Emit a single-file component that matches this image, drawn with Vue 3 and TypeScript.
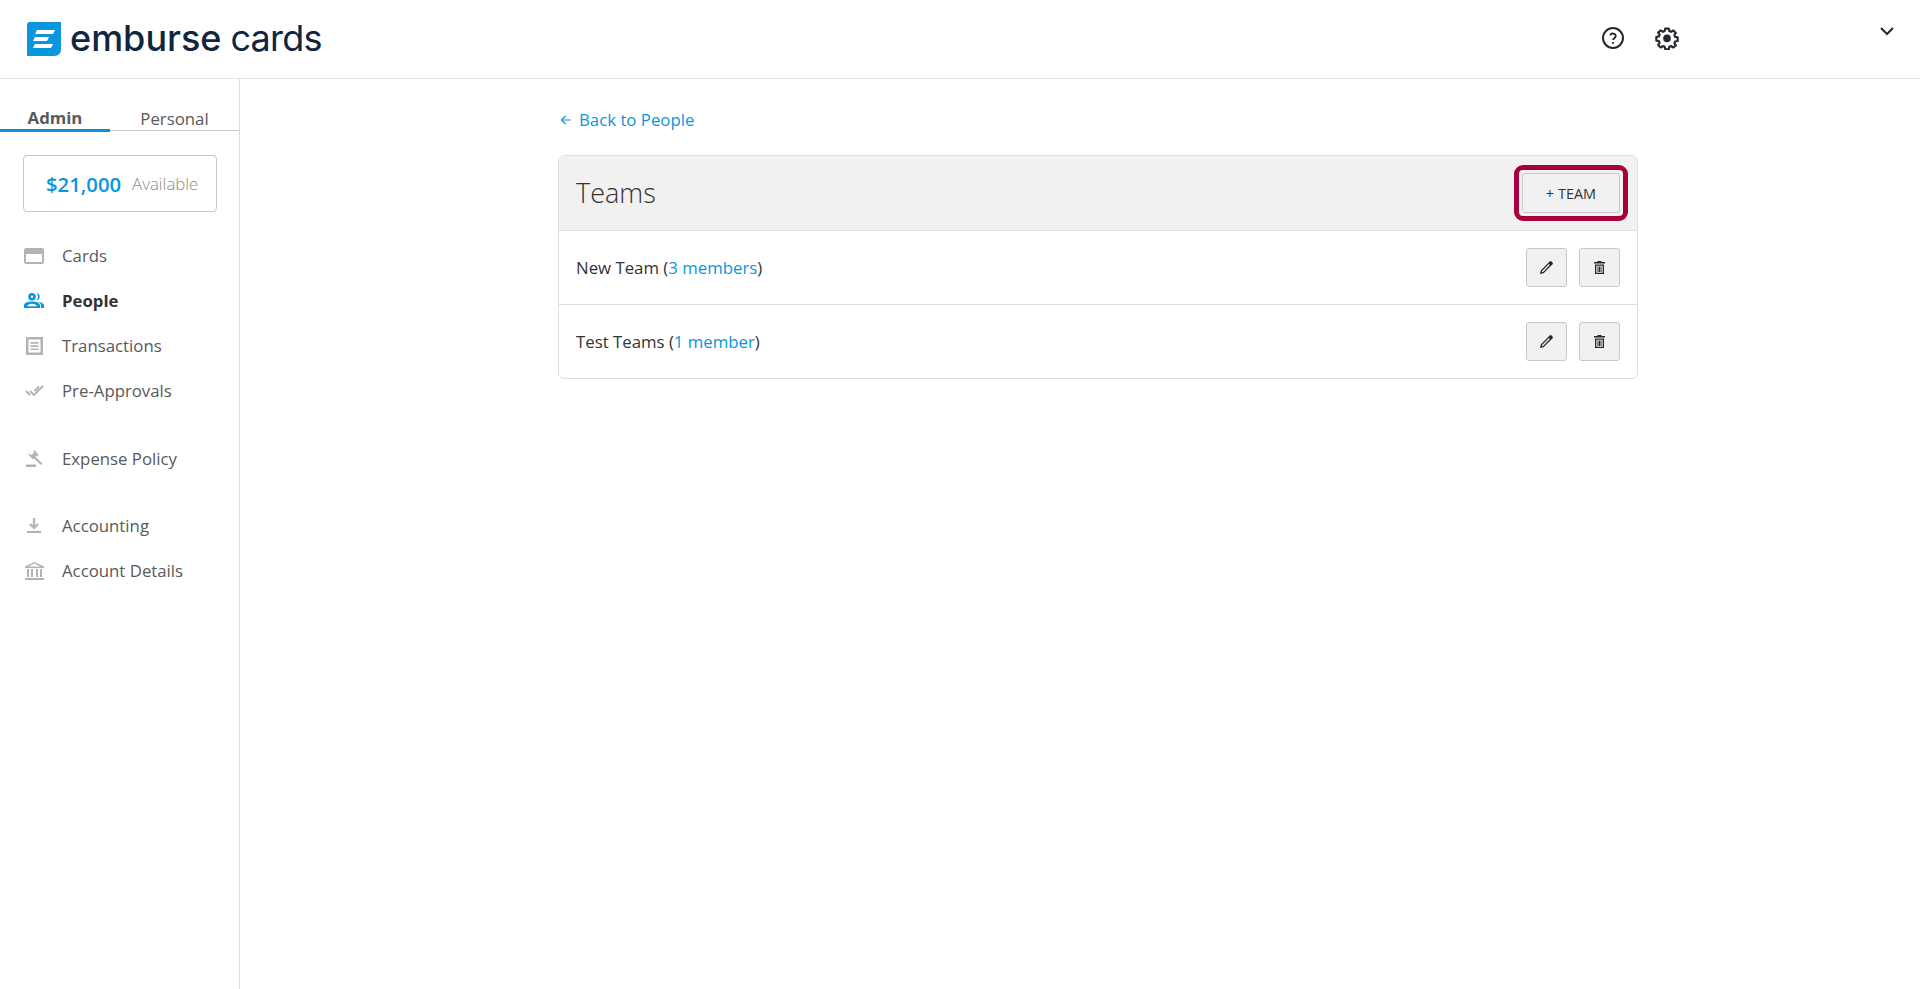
<script setup lang="ts">
interface NavItem { label: string; icon: string; active?: boolean; gap?: boolean }
const nav: NavItem[] = [
  { label: 'Cards', icon: 'card' },
  { label: 'People', icon: 'people', active: true },
  { label: 'Transactions', icon: 'receipt' },
  { label: 'Pre-Approvals', icon: 'checks' },
  { label: 'Expense Policy', icon: 'gavel', gap: true },
  { label: 'Accounting', icon: 'download', gap: true },
  { label: 'Account Details', icon: 'bank' },
]
const teams = [
  { name: 'New Team', members: '3 members' },
  { name: 'Test Teams', members: '1 member' },
]
</script>

<template>
  <div class="page">
    <header class="topbar">
      <div class="logo">
        <svg class="logo-mark" width="34" height="34" viewBox="0 0 34 34">
          <path d="M3 0H34V27Q34 34 27 34H0V3Q0 0 3 0Z" fill="#0a96dc" />
          <path d="M10 8H28L26 12H8ZM8 15H22L20 19H6ZM8 22H26L24 26H6Z" fill="#fff" />
        </svg>
        <span class="logo-text">emburse</span>
        <span class="logo-text second">cards</span>
      </div>
      <div class="top-actions">
        <svg width="24" height="24" viewBox="0 0 24 24" fill="none" stroke="#24292e" stroke-width="2">
          <circle cx="12" cy="12" r="10" />
          <path d="M9.200 9.400a2.900 2.900 0 0 1 5.600.7c0 1.900-2.800 2.300-2.800 4" stroke-width="1.800" />
          <circle cx="12" cy="17" r="1.100" fill="#24292e" stroke="none" />
        </svg>
        <svg width="24" height="24" viewBox="0 0 24 24" fill="none" stroke="#24292e" stroke-width="2.400" stroke-linejoin="round">
          <path d="M10 2h4l.6 2.800 1.900.8L19 4l2.800 2.900-1.600 2.400.8 1.900 2.900.6v4l-2.900.5-.8 1.900 1.600 2.400L19 23l-2.500-1.600-1.900.8L14 25h-4l-.6-2.800-1.900-.8L5 23l-2.800-2.900 1.600-2.400-.8-1.900L.1 15.300v-4l2.900-.6.8-1.900-1.600-2.400L5 4l2.500 1.600 1.900-.8Z" transform="translate(1.200 .8) scale(.9)" />
          <circle cx="12" cy="12.400" r="3.800" fill="#24292e" stroke="none" />
        </svg>
        <svg class="chevron" width="16" height="10" viewBox="0 0 16 10" fill="none" stroke="#24292e" stroke-width="2">
          <path d="M2 2l6 6 6-6" />
        </svg>
      </div>
    </header>

    <div class="body">
      <aside class="sidebar">
        <div class="tabs">
          <div class="tab active">Admin</div>
          <div class="tab">Personal</div>
        </div>
        <div class="balance">
          <span class="amount">$21,000</span>
          <span class="avail">Available</span>
        </div>
        <nav class="nav">
          <a v-for="item in nav" :key="item.label" class="nav-item" :class="{ active: item.active, gap: item.gap }">
            <span class="nav-icon">
              <svg v-if="item.icon === 'card'" width="20" height="16" viewBox="0 0 20 16">
                <path d="M2 0h16a2 2 0 0 1 2 2v12a2 2 0 0 1-2 2H2a2 2 0 0 1-2-2V2a2 2 0 0 1 2-2Zm0 6v8h16V6Z" fill="#b3b3b3" fill-rule="evenodd" />
              </svg>
              <svg v-else-if="item.icon === 'people'" width="20" height="15" viewBox="0 0 20 15" fill="#0a96dc">
                <path d="M8 0a3.800 3.800 0 1 1 0 7.600A3.800 3.800 0 0 1 8 0Zm0 2.600a1.200 1.200 0 1 0 0 2.400 1.200 1.200 0 0 0 0-2.400Z" fill-rule="evenodd" />
                <path d="M12.500 0a3.800 3.800 0 0 1 0 7.500 5.500 5.500 0 0 0 0-7.500Z" />
                <path d="M0 15v-2.500C0 10 3.500 8.600 8 8.600s8 1.400 8 3.900V15Zm3-1.800h10c-.6-1-2.400-2.400-5-2.400s-4.400 1.400-5 2.400Z" fill-rule="evenodd" />
                <path d="M14 8.800c3 .4 6 1.500 6 3.700V15h-3v-2.800c0-1.400-1.200-2.500-3-3.400Z" />
              </svg>
              <svg v-else-if="item.icon === 'receipt'" width="17" height="18" viewBox="0 0 17 18">
                <path d="M0 0h17v18H0Zm2.500 2.500v13h12v-13Z" fill="#b3b3b3" fill-rule="evenodd" />
                <path d="M4.500 5h8v1.700h-8ZM4.500 8.200h8v1.700h-8ZM4.500 11.400h8v1.700h-8Z" fill="#b3b3b3" />
              </svg>
              <svg v-else-if="item.icon === 'checks'" width="19" height="12" viewBox="0 0 19 12" fill="none" stroke="#b3b3b3" stroke-width="1.900">
                <path d="M1 6l4 4M5 6l4 4 9-9M9.500 6L14 1.500" />
              </svg>
              <svg v-else-if="item.icon === 'gavel'" width="17" height="17" viewBox="0 0 17 17" fill="#b3b3b3">
                <path d="M0 14.500h10V17H0ZM8.500 0l4 5-1.200 1.200-4-5ZM3.500 3.500l4.500 4.500-1.200 1.200-4.500-4.500ZM8 2.500l3 3-3.500 3.500-3-3ZM9.500 7l7 6.500-1.500 1.500-7-6.500Z" />
              </svg>
              <svg v-else-if="item.icon === 'download'" width="14" height="15" viewBox="0 0 14 15" fill="none" stroke="#b3b3b3" stroke-width="2.200">
                <path d="M7 0v9M3 6l4 4 4-4" />
                <path d="M0 14h14" />
              </svg>
              <svg v-else width="19" height="18" viewBox="0 0 19 18" fill="#b3b3b3">
                <path d="M9.500 0L19 4.500V6H0V4.500ZM9.500 1.600L3.800 4.500h11.400ZM2 7h2v8H2ZM6 7h2v8H6ZM11 7h2v8h-2ZM15 7h2v8h-2ZM0 16h19v2H0Z" fill-rule="evenodd" />
              </svg>
            </span>
            {{ item.label }}
          </a>
        </nav>
      </aside>

      <main class="main">
        <a class="back">
          <svg width="12" height="12" viewBox="0 0 12 12" fill="none" stroke="#0a96dc" stroke-width="1.200">
            <path d="M11 6H1.500M5.500 2L1.500 6l4 4" />
          </svg>
          Back to People
        </a>
        <section class="panel">
          <div class="panel-head">
            <h1>Teams</h1>
            <div class="highlight">
              <button class="add-btn">+ TEAM</button>
            </div>
          </div>
          <div v-for="team in teams" :key="team.name" class="row">
            <span>{{ team.name }} (<a class="link">{{ team.members }}</a>)</span>
            <div class="row-actions">
              <button class="icon-btn">
                <svg width="13" height="13" viewBox="0 0 13 13">
                  <path d="M0 13l.8-3.600L9.600.6a1.400 1.400 0 0 1 2 0l.8.8a1.400 1.400 0 0 1 0 2L3.600 12.200Zm1.800-1.800l1.300-.3 6.800-6.800-1-1-6.800 6.800Z" fill="#24292e" fill-rule="evenodd" />
                </svg>
              </button>
              <button class="icon-btn">
                <svg width="11" height="13" viewBox="0 0 11 13">
                  <path d="M3.500 0h4v1H11v1.500H0V1h3.500ZM1 3.500h9V13H1Zm1.300 1.200v7h6.400v-7Z" fill="#24292e" fill-rule="evenodd" />
                  <path d="M3.500 5.500h1v5.500h-1ZM5 5.500h1v5.500H5ZM6.500 5.500h1v5.500h-1Z" fill="#24292e" />
                </svg>
              </button>
            </div>
          </div>
        </section>
      </main>
    </div>
  </div>
</template>

<style>
html, body { margin: 0; background: #fff; }
</style>

<style scoped>
.page {
  height: 989px;
  display: flex;
  flex-direction: column;
  font-family: "Open Sans", "Liberation Sans", sans-serif;
  font-size: 16.8px;
  color: #333;
  overflow: hidden;
}
.topbar {
  height: 78px;
  flex: none;
  border-bottom: 1px solid #e3e3e3;
  display: flex;
  justify-content: space-between;
}
.logo {
  display: flex;
  align-items: center;
  padding-left: 27px;
  height: 78px;
}
.logo-mark { margin-right: 9px; }
.logo-text {
  font-family: Inter, sans-serif;
  font-size: 36px;
  font-weight: 500;
  color: #10253f;
  line-height: 1;
  margin-top: -3px;
}
.logo-text.second { margin-left: 9px; font-weight: 400; letter-spacing: -.8px; }
.top-actions {
  position: relative;
  display: flex;
  align-items: flex-start;
  gap: 30px;
  padding: 26px 0 0;
  margin-right: 241px;
}
.chevron { position: absolute; right: -216px; top: 26px; }
.body { flex: 1; display: flex; min-height: 0; }
.sidebar {
  width: 239px;
  flex: none;
  border-right: 1px solid #dcdcdc;
  padding-top: 27px;
}
.tabs {
  display: flex;
  height: 24px;
  border-bottom: 1px solid #c8c8c8;
}
.tab {
  flex: 1;
  text-align: center;
  color: #595959;
  line-height: 25px;
}
.tab.active {
  flex: none;
  width: 110px;
  font-weight: 700;
  border-bottom: 3px solid #0a8fd8;
  line-height: 23px;
  height: 23px;
}
.balance {
  margin: 24px 22px 0 23px;
  height: 55px;
  border: 1px solid #c8c8c8;
  border-radius: 4px;
  display: flex;
  align-items: center;
  padding-left: 22px;
  gap: 11px;
}
.amount { color: #0a96dc; font-size: 20.3px; font-weight: 600; }
.avail { color: #8a8a8a; font-weight: 300; }
.nav { display: flex; flex-direction: column; margin-top: 21px; }
.nav-item {
  height: 45px;
  display: flex;
  align-items: center;
  padding-left: 62px;
  position: relative;
  color: #595959;
}
.nav-item.gap { margin-top: 22.5px; }
.nav-item.gap + .nav-item:not(.gap) { margin-top: 0; }
.nav-item.active { font-weight: 700; color: #333; }
.nav-icon {
  position: absolute;
  left: 24px;
  width: 20px;
  display: flex;
  justify-content: center;
}
.main { flex: 1; padding: 27px 0 0 318px; min-width: 0; }
.back {
  display: flex;
  align-items: center;
  gap: 7px;
  height: 27px;
  color: #0a96dc;
  padding-left: 2px;
  margin-bottom: 22px;
}
.panel {
  width: 1080px;
  border: 1px solid #dedede;
  border-radius: 6px;
  overflow: hidden;
  box-sizing: border-box;
}
.panel-head {
  height: 74px;
  background: #f1f1f1;
  display: flex;
  align-items: center;
  justify-content: space-between;
  padding: 0 9px 0 17px;
}
h1 {
  margin: 0 0 1px;
  font-size: 27px;
  font-weight: 300;
  color: #333;
}
.highlight {
  border: 5px solid #a8003f;
  border-radius: 9px;
  padding: 3px;
  display: flex;
}
.add-btn {
  width: 98px;
  height: 40px;
  border: 1px solid #c8c8c8;
  border-radius: 3px;
  background: #f1f1f1;
  font-family: inherit;
  font-size: 14.5px;
  color: #333;
}
.row {
  height: 73px;
  border-top: 1px solid #dedede;
  display: flex;
  align-items: center;
  justify-content: space-between;
  padding: 0 17px;
}
.link { color: #0a96dc; }
.row-actions { display: flex; gap: 12px; }
.icon-btn {
  width: 41px;
  height: 39px;
  padding: 0;
  border: 1px solid #c8c8c8;
  border-radius: 3px;
  background: #f1f1f1;
  display: flex;
  align-items: center;
  justify-content: center;
}
</style>
